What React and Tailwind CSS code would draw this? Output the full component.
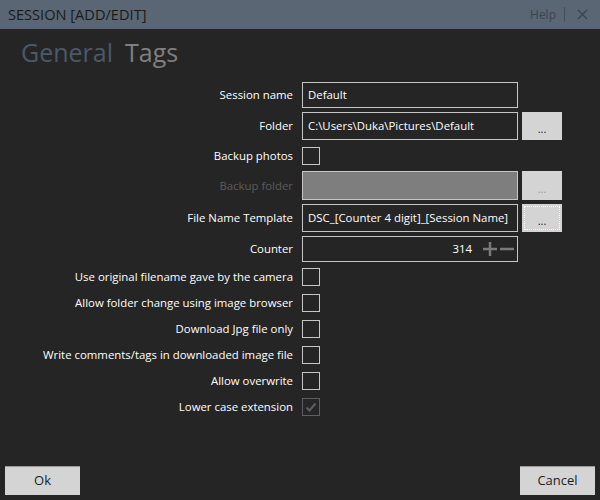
import React from 'react';

const font = { fontFamily: '"Open Sans", "Noto Sans", sans-serif' };

function Label({ children, dim }) {
  return (
    <div className={`w-[294px] shrink-0 pr-[1px] text-right text-[11.4px] ${dim ? 'text-[#5c5c5c]' : 'text-white'}`}>
      {children}
    </div>
  );
}

function DotsButton({ dim, focus }) {
  return (
    <div className={`relative ml-[-4px] flex h-full w-[40px] items-end justify-center bg-[#d4d4d4] pb-[6px] text-[11px] leading-none ${dim ? 'text-[#9a9a9a]' : 'text-[#222]'}`}>
      {focus && <div className="absolute inset-[2px] border border-dotted border-white" />}
      ...
    </div>
  );
}

function CheckRow({ label, checked, className }) {
  return (
    <div className={`flex h-[18px] items-center gap-[8px] ${className}`}>
      <Label>{label}</Label>
      <div className={`flex h-[18px] w-[18px] items-center justify-center border ${checked ? 'border-[#5e5e5e]' : 'border-[#c6c6c6]'}`}>
        {checked && (
          <svg width="12" height="12" viewBox="0 0 12 12">
            <path d="M1.5 6.5 L4.5 9.5 L10.5 2.5" stroke="#5a5f66" strokeWidth="2" fill="none" />
          </svg>
        )}
      </div>
    </div>
  );
}

export default function App() {
  return (
    <div className="flex h-[500px] w-[600px] flex-col overflow-hidden bg-[#252525]" style={font}>
      {/* title bar */}
      <div className="flex h-[29px] shrink-0 items-center bg-[#5a6673] pl-[8px] pr-[12px]">
        <span className="text-[14.6px] text-[#1a1a1a]">SESSION [ADD/EDIT]</span>
        <span className="ml-auto text-[12px] text-[#3b4550]">Help</span>
        <div className="mx-[8px] h-[15px] w-px bg-[#434d57]" />
        <svg width="11" height="11" viewBox="0 0 11 11" className="ml-[4px]">
          <path d="M1 1 L10 10 M10 1 L1 10" stroke="#3b4550" strokeWidth="1.4" />
        </svg>
      </div>

      {/* tabs */}
      <div className="flex gap-[12px] pl-[21px] pt-[5px] text-[25px] leading-[36px]">
        <span className="text-[#4b5969]">General</span>
        <span className="text-[#7f7f7f]">Tags</span>
      </div>

      {/* form */}
      <div className="flex flex-col pt-[12px]">
        <div className="flex h-[26px] items-center gap-[8px]">
          <Label>Session name</Label>
          <div className="flex h-full w-[216px] items-center border border-[#c6c6c6] px-[5px] text-[11.4px] text-white">Default</div>
        </div>
        <div className="mt-[4px] flex h-[28px] items-center gap-[8px]">
          <Label>Folder</Label>
          <div className="flex h-full w-[216px] items-center border border-[#c6c6c6] px-[5px] text-[11.4px] text-white">C:\Users\Duka\Pictures\Default</div>
          <DotsButton />
        </div>
        <CheckRow label="Backup photos" className="mt-[7px]" />
        <div className="mt-[6px] flex h-[29px] items-center gap-[8px]">
          <Label dim>Backup folder</Label>
          <div className="h-full w-[216px] border border-[#c6c6c6] bg-[#7e7e7e]" />
          <DotsButton dim />
        </div>
        <div className="mt-[4px] flex h-[28px] items-center gap-[8px]">
          <Label>File Name Template</Label>
          <div className="flex h-full w-[216px] items-center overflow-hidden whitespace-nowrap border border-[#c6c6c6] px-[5px] text-[11.4px] text-white">DSC_[Counter 4 digit]_[Session Name]</div>
          <DotsButton focus />
        </div>
        <div className="mt-[4px] flex h-[26px] items-center gap-[8px]">
          <Label>Counter</Label>
          <div className="flex h-full w-[216px] items-center justify-end border border-[#c6c6c6] pr-[3px] text-[11.4px] text-white">
            <span>314</span>
            <svg width="14" height="14" viewBox="0 0 14 14" className="ml-[11px]">
              <path d="M7 0 V14 M0 7 H14" stroke="#7a7a7a" strokeWidth="2.5" />
            </svg>
            <svg width="14" height="14" viewBox="0 0 14 14" className="ml-[3px]">
              <path d="M0 7 H14" stroke="#7a7a7a" strokeWidth="2.5" />
            </svg>
          </div>
        </div>
        <CheckRow label="Use original filename gave by the camera" className="mt-[6px]" />
        <CheckRow label="Allow folder change using image browser" className="mt-[8px]" />
        <CheckRow label="Download Jpg file only" className="mt-[8px]" />
        <CheckRow label="Write comments/tags in downloaded image file" className="mt-[8px]" />
        <CheckRow label="Allow overwrite" className="mt-[8px]" />
        <CheckRow label="Lower case extension" checked className="mt-[8px]" />
      </div>

      {/* footer */}
      <div className="mt-auto flex justify-between px-[5px] pb-[5px]">
        <button className="h-[29px] w-[75px] border-t border-[#9a9a9a] bg-[#d4d4d4] text-[13px] text-[#1e1e1e]">Ok</button>
        <button className="h-[29px] w-[75px] border-t border-[#9a9a9a] bg-[#d4d4d4] text-[13px] text-[#1e1e1e]">Cancel</button>
      </div>
    </div>
  );
}
